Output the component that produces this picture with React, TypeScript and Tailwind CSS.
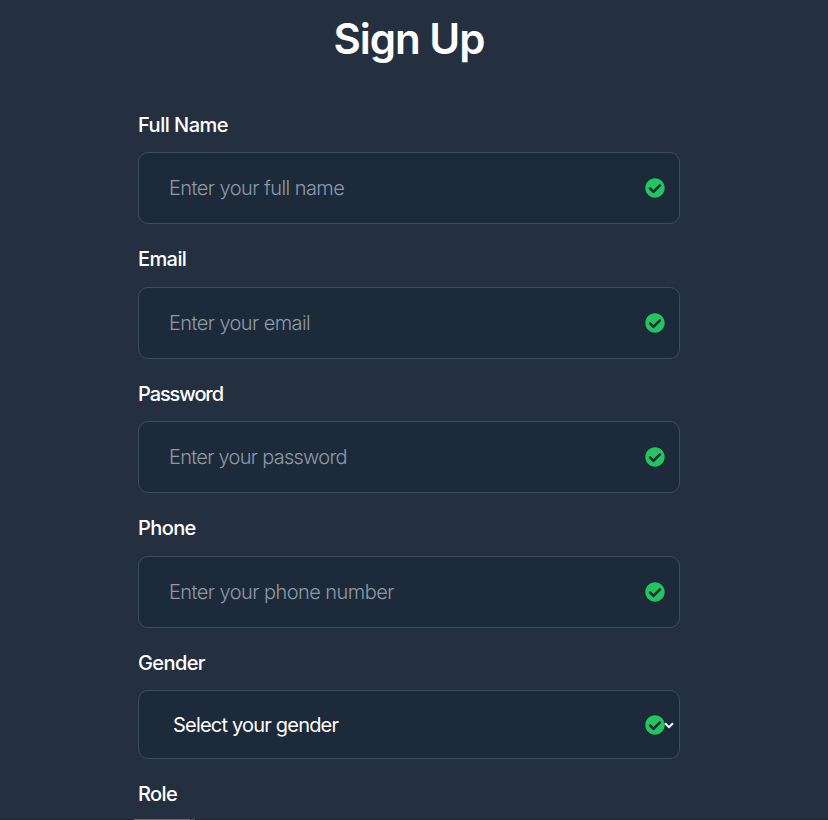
import { FaCheckCircle } from "react-icons/fa";

type Field = { label: string; placeholder: string; type: string; labelClass: string; inputClass: string };

const fields: Field[] = [
  { label: "Full Name", placeholder: "Enter your full name", type: "text", labelClass: "leading-[28px] tracking-[-0.5px]", inputClass: "tracking-[-0.56px]" },
  { label: "Email", placeholder: "Enter your email", type: "email", labelClass: "leading-[27.5px] tracking-[-0.6px]", inputClass: "tracking-[-0.58px]" },
  { label: "Password", placeholder: "Enter your password", type: "password", labelClass: "leading-[28px] tracking-[-1.1px]", inputClass: "tracking-[-0.72px]" },
  { label: "Phone", placeholder: "Enter your phone number", type: "tel", labelClass: "leading-[27.5px] tracking-[-0.6px]", inputClass: "tracking-[-0.55px]" },
];

function Check({ className }: { className: string }) {
  return <FaCheckCircle className={`absolute top-1/2 size-5 -translate-y-1/2 text-[#22c55e] ${className}`} />;
}

export default function App() {
  return (
    <main className="flex h-[820px] flex-col overflow-hidden bg-[#24303f] font-['Inter',sans-serif] text-white">
      <form className="ml-[138px] h-[819px] w-[542px] shrink-0 overflow-hidden pt-[15px]">
        <h1 className="h-12 text-center text-[42px] leading-[48px] font-semibold tracking-[-1px]">
          <span>Sign Up</span>
        </h1>
        <div className="mt-12">
          {fields.map((f) => (
            <div key={f.label} className="h-[134.5px]">
              <label className={`block h-[41px] text-[20px] font-medium ${f.labelClass}`}>{f.label}</label>
              <div className="relative h-[72px]">
                <input
                  type={f.type}
                  placeholder={f.placeholder}
                  className={`h-full w-full rounded-[10px] border border-[#3d4d60] bg-[#1d2a39] px-[30px] text-[20px] font-light outline-none placeholder:text-[#8d9aa9] ${f.inputClass}`}
                />
                <Check className="right-[15px]" />
              </div>
            </div>
          ))}
          <label className="block h-[41px] text-[20px] leading-[28px] font-medium tracking-[-0.6px]">
            Gender
          </label>
          <div className="relative flex h-[69px] items-center rounded-[10px] border border-[#3d4d60] bg-[#1d2a39] pl-[34px] text-[20px] tracking-[-0.8px]">
            <span>Select your gender</span>
            <Check className="right-[14px]" />
            <svg
              viewBox="0 0 10 7"
              className="absolute top-[31px] right-[5px] h-[7px] w-[10px]"
              fill="none"
              stroke="currentColor"
              strokeWidth="2"
            >
              <path d="M1 1.2 L5 5.2 L9 1.2" />
            </svg>
          </div>
          <label className="mt-[21px] block h-[39px] text-[20px] leading-[28px] font-medium tracking-[-0.6px]">
            Role
          </label>
        </div>
      </form>
      <div className="flex h-px w-full shrink-0 gap-px bg-[#2a2430] pl-[134px]">
        <div className="h-px w-14 bg-[#6b6d74]" />
        <div className="h-px w-1 bg-[#55575f]" />
      </div>
    </main>
  );
}
